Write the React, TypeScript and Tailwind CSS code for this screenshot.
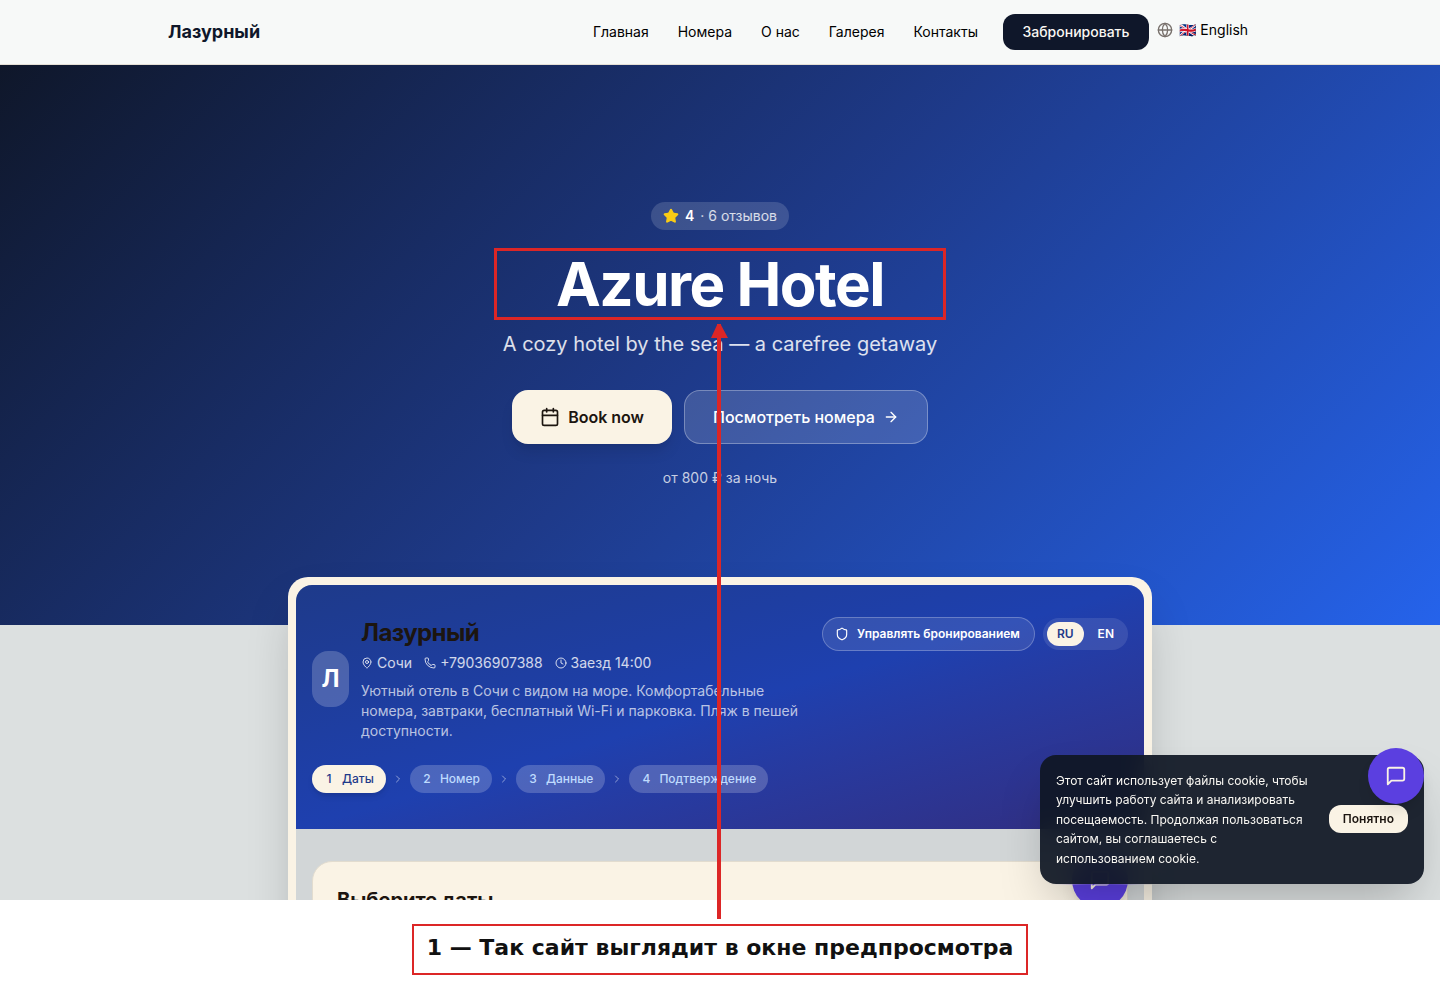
import React from 'react'
import { ArrowRight, Calendar, ChevronRight, Clock, Globe, MapPin, Phone, Shield, Star } from 'lucide-react'

const navLinks = ['Главная', 'Номера', 'О нас', 'Галерея', 'Контакты']
const steps = ['Даты', 'Номер', 'Данные', 'Подтверждение']

const Header = () => {
  return (
    <header className="relative z-10 border-b border-[#e5e0d6] bg-[#f7f9f8]">
      <div className="mx-auto flex h-16 max-w-6xl items-center justify-between px-6">
        <a href="#" className="text-lg font-bold text-[#0f172a]">
          Лазурный
        </a>
        <div className="flex items-center gap-2">
          <nav className="flex items-center gap-[5px] text-sm text-black">
            {navLinks.map((link) => (
              <a key={link} href="#" className="px-3 py-2">
                {link}
              </a>
            ))}
            <a
              href="#booking"
              className="ml-2 w-[146px] rounded-xl bg-[#0f172a] py-2 text-center font-medium text-[#faf8f3]"
            >
              Забронировать
            </a>
          </nav>
          <div className="flex items-center gap-1.5 pb-1">
            <Globe className="size-4 text-[#78716c]" />
            <select
              aria-label="Язык"
              className="w-[93px] appearance-none bg-transparent text-sm text-black"
            >
              <option>🇬🇧 English</option>
              <option>🇷🇺 Русский</option>
            </select>
          </div>
        </div>
      </div>
    </header>
  )
}

const Hero = () => {
  return (
    <section className="flex min-h-[560px] items-center justify-center bg-[linear-gradient(135deg,#0f172a_0%,#1e3a8a_50%,#2563eb_100%)]">
      <div className="flex min-w-[440px] flex-col text-center text-white">
        <div className="mx-auto flex items-center gap-1.5 rounded-full bg-white/15 px-3 py-1 text-sm">
          <Star className="size-4 fill-[#facc15] text-[#facc15]" />
          <span className="font-semibold">4</span>
          <span className="text-white/80">· 6 отзывов</span>
        </div>
        <h1 className="relative mt-6 text-6xl leading-none font-bold tracking-tight">
          Azure Hotel
          <span className="absolute -inset-1.5 border-3 border-[#dc2626]" />
        </h1>
        <p className="mt-4 text-xl text-white/85">A cozy hotel by the sea — a carefree getaway</p>
        <div className="mt-8 flex justify-center gap-3">
          <a
            href="#booking"
            className="flex items-center gap-2 rounded-2xl bg-[#faf3e5] px-7 py-3.5 font-semibold text-[#1c1510] shadow-lg"
          >
            <Calendar className="size-5" />
            Book now
          </a>
          <a
            href="#rooms"
            className="flex items-center gap-2 rounded-2xl border border-white/30 bg-white/15 px-7 py-3.5 font-medium"
          >
            Посмотреть номера
            <ArrowRight className="size-4" />
          </a>
        </div>
        <p className="mt-6 text-sm text-white/75">от 800 ₽ за ночь</p>
      </div>
    </section>
  )
}

const Steps = () => {
  return (
    <ol className="mt-6 flex items-center gap-1.5 pb-1 text-xs font-medium">
      {steps.map((step, index) => (
        <React.Fragment key={step}>
          {index > 0 && (
            <li aria-hidden="true">
              <ChevronRight className="size-3 text-white/50" />
            </li>
          )}
          <li
            className={
              index === 0
                ? 'flex items-center gap-1.5 rounded-full bg-[#faf3e5] py-1.5 pr-3 pl-2.5 text-[#1e3a8a] shadow-md'
                : 'flex items-center gap-1.5 rounded-full bg-white/20 py-1.5 pr-3 pl-2.5 text-[#bfdbfe]'
            }
          >
            <span className="w-3.5 text-center">{index + 1}</span>
            {step}
          </li>
        </React.Fragment>
      ))}
    </ol>
  )
}

const BookingWidget = () => {
  return (
    <section
      id="booking"
      className="relative mx-auto -mt-12 max-w-[864px] rounded-[20px] bg-[#faf3e5] p-2 shadow-2xl"
    >
      <div className="overflow-hidden rounded-2xl bg-[#d2d6d7]">
        <div className="bg-linear-to-br from-[#1e3a8a] via-[#1e40af] to-[#312e81] px-4 py-8">
          <div className="flex items-start justify-between gap-3">
            <div className="flex items-center gap-3">
              <div className="flex h-14 w-[37px] shrink-0 items-center justify-center rounded-2xl bg-white/20 text-2xl font-bold text-white">
                Л
              </div>
              <div>
                <h2 className="text-2xl font-bold tracking-tight text-[#1c1510]">Лазурный</h2>
                <div className="mt-1 flex items-center gap-3 text-sm text-white/80">
                  <span className="flex items-center gap-1">
                    <MapPin className="size-3" />
                    Сочи
                  </span>
                  <span className="flex items-center gap-1">
                    <Phone className="size-3" />
                    +79036907388
                  </span>
                  <span className="flex items-center gap-1">
                    <Clock className="size-3" />
                    Заезд 14:00
                  </span>
                </div>
                <p className="mt-2 max-w-md text-sm text-white/70">
                  Уютный отель в Сочи с видом на море. Комфортабельные номера, завтраки, бесплатный
                  Wi-Fi и парковка. Пляж в пешей доступности.
                </p>
              </div>
            </div>
            <div className="flex shrink-0 items-center gap-2 text-xs font-semibold text-white">
              <button className="flex items-center gap-2 rounded-full border border-white/25 bg-white/10 py-2 pr-3.5 pl-3">
                <Shield className="size-3.5" />
                Управлять бронированием
              </button>
              <div className="flex gap-1 rounded-full bg-white/10 p-1">
                <button className="rounded-full bg-[#faf3e5] px-2.5 py-1 text-[#1e3a8a]">RU</button>
                <button className="rounded-full px-2.5 py-1">EN</button>
              </div>
            </div>
          </div>
          <Steps />
        </div>
        <div className="px-4 py-8">
          <div className="rounded-[20px] border border-[#e2dccf] bg-[#faf3e5] p-6">
            <h3 className="text-xl font-bold text-[#1c1510]">Выберите даты</h3>
          </div>
        </div>
      </div>
    </section>
  )
}

const ChatButton = ({ className }: { className: string }) => {
  return (
    <button
      aria-label="Чат"
      className={`absolute flex size-14 items-center justify-center rounded-full bg-[#5b3fe0] text-[#faf3e5] shadow-lg ${className}`}
    >
      <svg
        viewBox="0 0 24 24"
        className="size-[22px] fill-none stroke-current stroke-2"
        strokeLinecap="round"
        strokeLinejoin="round"
      >
        <path d="M21 15a2 2 0 0 1-2 2H7l-4 4V5a2 2 0 0 1 2-2h14a2 2 0 0 1 2 2z" />
      </svg>
    </button>
  )
}

const CookieNotice = () => {
  return (
    <div className="absolute right-4 bottom-4 flex w-96 items-center gap-4 rounded-2xl bg-[#0f1724]/93 p-4 text-xs text-[#faf8f3] shadow-2xl backdrop-blur-md">
      <p className="flex-1 leading-relaxed">
        Этот сайт использует файлы cookie, чтобы улучшить работу сайта и анализировать посещаемость.
        Продолжая пользоваться сайтом, вы соглашаетесь с использованием cookie.
      </p>
      <button className="rounded-xl bg-[#faf3e5] px-3.5 py-1.5 font-semibold text-[#1c1510]">
        Понятно
      </button>
    </div>
  )
}

const App = () => {
  return (
    <div className="relative flex h-screen flex-col bg-white font-['Inter','Noto_Color_Emoji',sans-serif]">
      {/* Site preview */}
      <div className="relative min-h-0 flex-1 overflow-hidden bg-[#dce0e0]">
        <Header />
        <Hero />
        <BookingWidget />
        <ChatButton className="right-[312px] -bottom-2" />
        <CookieNotice />
        <ChatButton className="right-4 bottom-24" />
      </div>

      {/* Caption */}
      <div className="flex justify-center pt-6 pb-[23px]">
        <p className="border-2 border-[#dc2626] px-[13px] pt-1.5 pb-[9px] font-['DejaVu_Sans',sans-serif] text-[22px] leading-8 font-bold text-[#111111]">
          1 — Так сайт выглядит в окне предпросмотра
        </p>
      </div>

      {/* Arrow from the caption to the title */}
      <div className="absolute top-[324px] bottom-[79px] left-1/2 flex w-[18px] -translate-x-[10px] flex-col items-center">
        <svg viewBox="0 0 18 14" className="h-3.5 w-[18px] shrink-0 fill-[#dc2626]">
          <path d="M7 0h4v1l7 13H1L7 1z" />
        </svg>
        <div className="w-1 flex-1 bg-[#dc2626]" />
      </div>
    </div>
  )
}

export default App
